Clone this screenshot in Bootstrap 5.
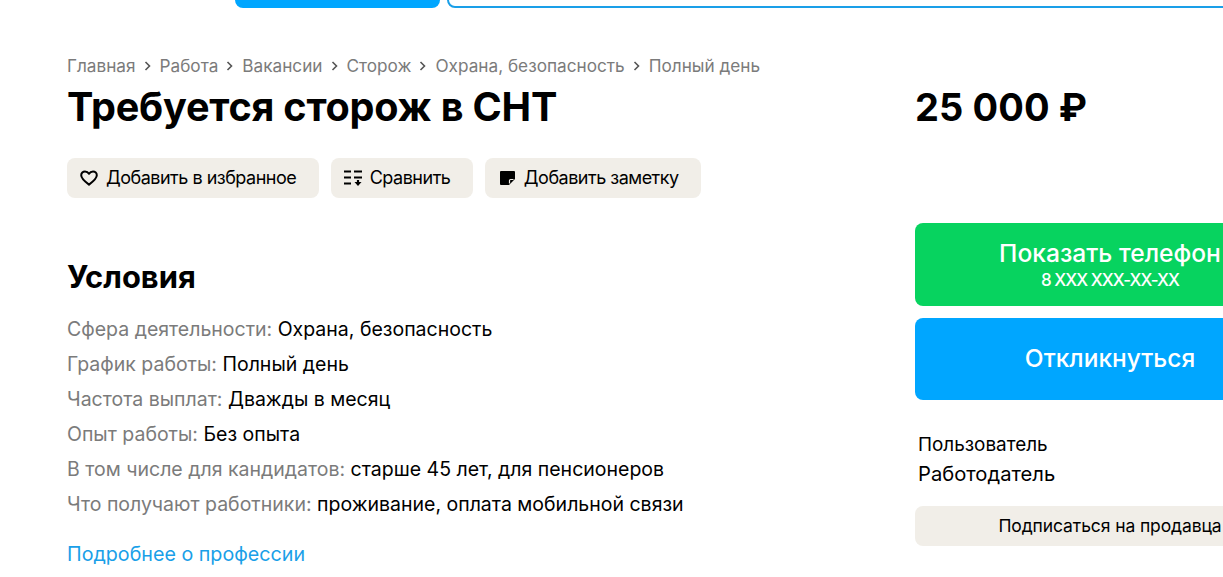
<!DOCTYPE html>
<html lang="ru">
<head>
  <meta charset="UTF-8" />
  <meta name="viewport" content="width=device-width, initial-scale=1.0" />
  <title>Требуется сторож в СНТ</title>
  <link href="https://cdn.jsdelivr.net/npm/bootstrap@5.3.3/dist/css/bootstrap.min.css" rel="stylesheet">
  <style>
    html, body { height: 100%; overflow: hidden; }
    body { font-family: Inter, "Noto Sans", sans-serif; color: #000; background: #fff; }
    .top-strip { height: 8px; padding-left: 235px; gap: 7px; }
    .top-btn-fill { width: 205px; height: 40px; flex: none; background: #00a6ff; border-radius: 8px; }
    .top-btn-line { width: 900px; height: 40px; flex: none; border: 2px solid #1a9fe8; border-radius: 8px; }
    .page-wrap { padding-left: 67px; width: 1305px; }
    .left-col { width: 848px; flex: none; }
    .right-col { width: 390px; flex: none; }
    .crumbs { margin-top: 47px; font-size: 17.2px; line-height: 22px; color: #7b7b7b; gap: 8px; white-space: nowrap; }
    .crumbs svg { flex: none; }
    .job-title { font-size: 39.6px; font-weight: 700; line-height: 46px; margin: 7px 0 0; letter-spacing: -.2px; }
    .tool-row { margin-top: 28px; gap: 12px; }
    .tool-btn { height: 40px; background: #f1eee8; border-radius: 8px; font-size: 18px; line-height: 38px; letter-spacing: -.5px; color: #000; padding: 0 22.500px 0 13px; gap: 8px; }
    .sect-title { font-size: 30.9px; font-weight: 700; line-height: 36px; margin: 61px 0 17px; }
    .cond-row { font-size: 19.5px; line-height: 35px; white-space: nowrap; }
    .cond-row span { color: #7b7b7b; }
    .more-link { display: block; margin-top: 20px; font-size: 19.7px; line-height: 24px; color: #1a9fe8; text-decoration: none; }
    .price { font-size: 38px; font-weight: 700; line-height: 46px; margin-top: 76px; letter-spacing: .1px; }
    .act-btn { color: #fff; border-radius: 8px; font-weight: 500; }
    .act-green { height: 83px; margin-top: 93px; background: #07d35f; font-size: 24.6px; line-height: 30px; }
    .act-green small { font-size: 17px; line-height: 24px; letter-spacing: -.93px; }
    .act-blue { height: 82px; margin-top: 12px; padding-bottom: 2px; background: #00a6ff; font-size: 24.5px; }
    .seller { margin: 30px 0 0 3px; font-size: 18.9px; line-height: 29px; }
    .seller-role { font-size: 20.2px; }
    .sub-btn { height: 40px; margin-top: 17px; background: #f1eee8; border-radius: 8px; font-size: 17.5px; letter-spacing: -.1px; }
  </style>
</head>
<body>
  <div class="top-strip d-flex align-items-end overflow-hidden">
    <div class="top-btn-fill"></div>
    <div class="top-btn-line"></div>
  </div>

  <div class="page-wrap d-flex">
    <div class="left-col">
      <nav class="crumbs d-flex align-items-center">
        <span>Главная</span>
        <svg width="8" height="12" viewBox="0 0 8 12"><path d="M1.5 2l4 4-4 4" fill="none" stroke="#555" stroke-width="1.6"/></svg>
        <span>Работа</span>
        <svg width="8" height="12" viewBox="0 0 8 12"><path d="M1.5 2l4 4-4 4" fill="none" stroke="#555" stroke-width="1.6"/></svg>
        <span>Вакансии</span>
        <svg width="8" height="12" viewBox="0 0 8 12"><path d="M1.5 2l4 4-4 4" fill="none" stroke="#555" stroke-width="1.6"/></svg>
        <span>Сторож</span>
        <svg width="8" height="12" viewBox="0 0 8 12"><path d="M1.5 2l4 4-4 4" fill="none" stroke="#555" stroke-width="1.6"/></svg>
        <span>Охрана, безопасность</span>
        <svg width="8" height="12" viewBox="0 0 8 12"><path d="M1.5 2l4 4-4 4" fill="none" stroke="#555" stroke-width="1.6"/></svg>
        <span>Полный день</span>
      </nav>
      <h1 class="job-title">Требуется сторож в СНТ</h1>

      <div class="tool-row d-flex">
        <div class="tool-btn d-flex align-items-center">
          <svg width="18" height="16" viewBox="0 0 18 16"><path d="M9 14.6C4 10.8 1.2 8.2 1.2 5.2 1.2 3 2.9 1.4 5 1.400c1.600 0 3.100.9 4 2.400.9-1.500 2.400-2.400 4-2.400 2.100 0 3.800 1.600 3.800 3.800 0 3-2.800 5.600-7.800 9.400z" fill="none" stroke="#000" stroke-width="2" stroke-linejoin="round"/></svg>
          <span>Добавить в избранное</span>
        </div>
        <div class="tool-btn d-flex align-items-center">
          <svg width="18" height="16" viewBox="0 0 18 16"><path d="M0 1.500h7M10 1.500h8M0 7.500h7M10 7.500h8M0 13.500h7" fill="none" stroke="#000" stroke-width="2.200"/><path d="M14 10v4" fill="none" stroke="#000" stroke-width="2.200"/><path d="M10.500 12h7L14 16z" fill="#000"/></svg>
          <span>Сравнить</span>
        </div>
        <div class="tool-btn d-flex align-items-center">
          <svg width="18" height="14" viewBox="0 0 18 14"><path d="M3 0h13a1 1 0 0 1 1 1v7l-6 6H3a1 1 0 0 1-1-1V1a1 1 0 0 1 1-1z" fill="#000"/><path d="M11.500 12.500V9.500a1 1 0 0 1 1-1h3" fill="none" stroke="#f1eee8" stroke-width="1.200"/></svg>
          <span>Добавить заметку</span>
        </div>
      </div>

      <h2 class="sect-title">Условия</h2>
      <div class="cond-row"><span>Сфера деятельности:</span> Охрана, безопасность</div>
      <div class="cond-row"><span>График работы:</span> Полный день</div>
      <div class="cond-row"><span>Частота выплат:</span> Дважды в месяц</div>
      <div class="cond-row"><span>Опыт работы:</span> Без опыта</div>
      <div class="cond-row"><span>В том числе для кандидатов:</span> старше 45 лет, для пенсионеров</div>
      <div class="cond-row"><span>Что получают работники:</span> проживание, оплата мобильной связи</div>
      <a class="more-link" href="#">Подробнее о профессии</a>
    </div>

    <div class="right-col">
      <div class="price">25 000 ₽</div>
      <div class="act-btn act-green d-flex flex-column align-items-center justify-content-center">
        <div>Показать телефон</div>
        <small>8 XXX XXX-XX-XX</small>
      </div>
      <div class="act-btn act-blue d-flex align-items-center justify-content-center">Откликнуться</div>
      <div class="seller">Пользователь<br><span class="seller-role">Работодатель</span></div>
      <div class="sub-btn d-flex align-items-center justify-content-center">Подписаться на продавца</div>
    </div>
  </div>

  <script src="https://cdn.jsdelivr.net/npm/bootstrap@5.3.3/dist/js/bootstrap.bundle.min.js"></script>
</body>
</html>
